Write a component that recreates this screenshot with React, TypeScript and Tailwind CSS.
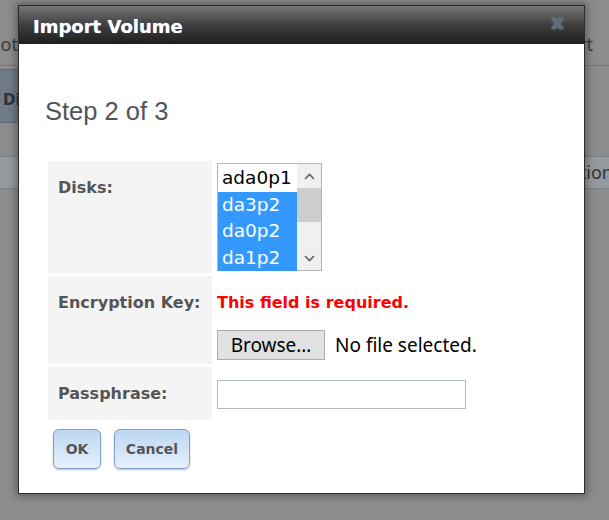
import React from 'react'

const disks = [
  { name: 'ada0p1', selected: false },
  { name: 'da3p2', selected: true },
  { name: 'da0p2', selected: true },
  { name: 'da1p2', selected: true },
]

function Background() {
  return (
    <div className="flex h-full flex-col">
      <div className="mt-[24px] flex h-[42px] items-start justify-between border-b border-[#777] pt-[7px] text-[18px] text-[#3a3a3a] [font-family:'Noto_Sans',sans-serif]">
        <span className="-ml-[22px]">Boot</span>
        <span className="mr-[16px]">Import</span>
      </div>
      <div className="mt-[3px] flex h-[54px]">
        <div className="flex w-[120px] items-center border-y border-[#5f6a74] bg-[#6f7b86] pl-[3px] pt-[8px] text-[15px] font-bold text-[#2e343a] [font-family:'DejaVu_Sans',sans-serif]">
          Disks
        </div>
      </div>
      <div className="mt-[33px] flex h-[33px] items-center justify-end border-y border-[#7c8186] bg-[#959a9f] text-[18px] text-[#333] [font-family:'Noto_Sans',sans-serif]">
        <span className="-mr-[4px]">Description</span>
      </div>
    </div>
  )
}

function Label({ children }: { children: React.ReactNode }) {
  return (
    <td className="w-[164px] bg-[#f4f4f4] px-[10px] pt-[17px] align-top text-[16px] font-bold leading-[20px] text-[#555] [font-family:'DejaVu_Sans',sans-serif]">
      {children}
    </td>
  )
}

function DiskList() {
  return (
    <div className="flex h-[108px] w-[105px] border border-[#b4b4b4] bg-white">
      <div className="flex-1 pt-[1px]">
        {disks.map((d) => (
          <div
            key={d.name}
            className={
              'h-[26.5px] pl-[4px] text-[18.5px] leading-[26px] [font-family:\'DejaVu_Sans\',sans-serif] ' +
              (d.selected ? 'bg-[#3399ff] text-white' : 'text-black')
            }
          >
            {d.name}
          </div>
        ))}
      </div>
      <div className="flex w-[24px] flex-col bg-[#f0f0f0]">
        <div className="flex h-[24px] items-center justify-center">
          <svg width="11" height="7" viewBox="0 0 11 7">
            <path d="M1 6 L5.5 1.5 L10 6" fill="none" stroke="#606060" strokeWidth="1.6" />
          </svg>
        </div>
        <div className="h-[34px] bg-[#cdcdcd]" />
        <div className="flex-1" />
        <div className="flex h-[24px] items-center justify-center">
          <svg width="11" height="7" viewBox="0 0 11 7">
            <path d="M1 1 L5.5 5.5 L10 1" fill="none" stroke="#606060" strokeWidth="1.6" />
          </svg>
        </div>
      </div>
    </div>
  )
}

function Dialog() {
  return (
    <div className="absolute left-[18px] top-[5px] flex h-[489px] w-[567px] flex-col border border-[#2b2b2b] bg-white shadow-[0_0_8px_2px_rgba(0,0,0,0.35)]">
      <div className="flex h-[38px] shrink-0 items-center justify-between bg-gradient-to-b from-[#777] via-[#3f3f3f] to-[#1f1f1f] pl-[14px] pr-[20px] pt-[3px]">
        <span className="text-[18px] font-bold text-white [font-family:'DejaVu_Sans',sans-serif] [text-shadow:0_0_1px_#9cc8ff]">
          Import Volume
        </span>
        <span className="mt-[-9px] text-[20px] font-bold leading-[20px] text-[#5b6d7c] [font-family:'DejaVu_Sans',sans-serif] [text-shadow:0_0_2px_#9ab]">
          x
        </span>
      </div>
      <div className="flex-1 px-[26px] pt-[52px]">
        <div className="text-[25.5px] leading-[30px] text-[#50555b] [font-family:'Liberation_Sans',sans-serif]">
          Step 2 of 3
        </div>
        <table className="mt-[32px] border-separate border-spacing-x-[3px] border-spacing-y-[3px]">
          <tbody>
            <tr>
              <Label>Disks:</Label>
              <td className="p-[2px] align-top">
                <DiskList />
              </td>
            </tr>
            <tr>
              <Label>Encryption Key:</Label>
              <td className="h-[88px] px-[2px] pt-[17px] align-top">
                <div className="text-[16px] font-bold leading-[20px] text-[#ff0000] [font-family:'DejaVu_Sans',sans-serif]">
                  This field is required.
                </div>
                <div className="mt-[17px] flex items-center gap-[10px] text-[19px] text-black [font-family:'Noto_Sans',sans-serif]">
                  <span className="flex h-[30px] w-[108px] items-center justify-center border border-[#adadad] bg-[#e1e1e1]">
                    Browse…
                  </span>
                  <span>No file selected.</span>
                </div>
              </td>
            </tr>
            <tr>
              <Label>Passphrase:</Label>
              <td className="h-[53px] px-[2px] pt-[1px] align-middle">
                <div className="h-[29px] w-[249px] border border-[#b3bac6] bg-white" />
              </td>
            </tr>
          </tbody>
        </table>
        <div className="ml-[8px] mt-[6px] flex gap-[13px]">
          {['OK', 'Cancel'].map((b) => (
            <span
              key={b}
              className={
                'flex h-[40px] items-center justify-center rounded-[6px] border border-[#7fa3c7] bg-gradient-to-b from-[#bcd7f1] to-[#e6f1fc] text-[14px] font-bold text-[#555] shadow-[0_1px_2px_rgba(0,0,0,0.25)] [font-family:\'DejaVu_Sans\',sans-serif] ' +
                (b === 'OK' ? 'w-[48px]' : 'w-[76px]')
              }
            >
              {b}
            </span>
          ))}
        </div>
      </div>
    </div>
  )
}

export default function App() {
  return (
    <div className="relative h-[520px] w-[609px] overflow-hidden bg-[#8c8c8c]">
      <Background />
      <Dialog />
    </div>
  )
}
